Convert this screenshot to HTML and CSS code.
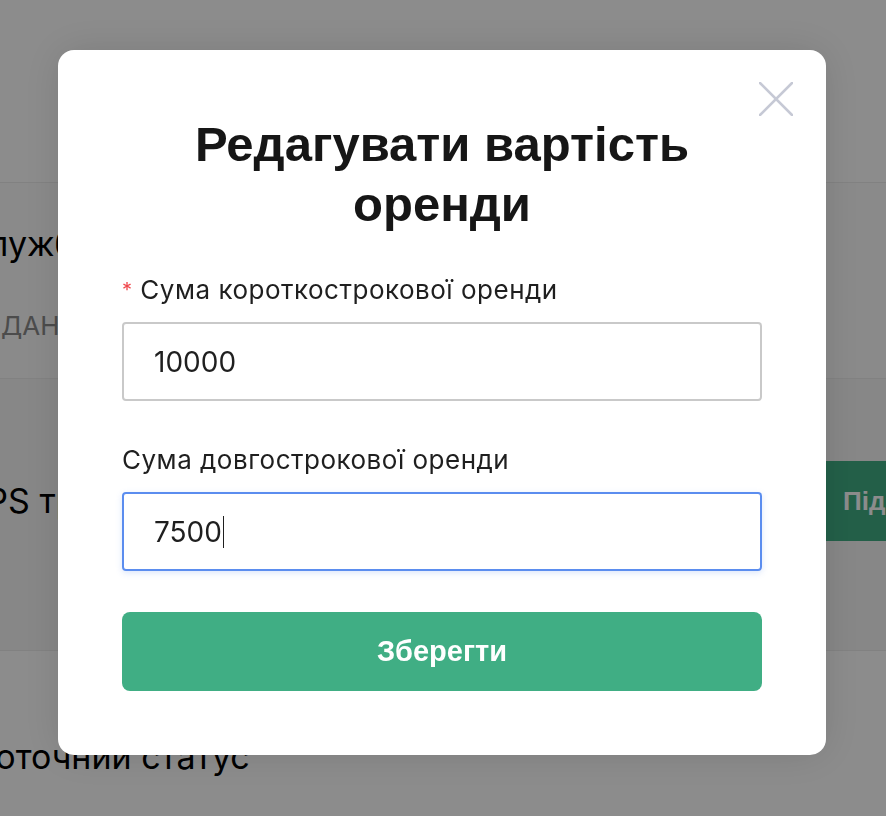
FILE: index.html
```html
<!DOCTYPE html>
<html lang="uk">
<head>
    <meta charset="UTF-8">
    <meta name="viewport" content="width=device-width, initial-scale=1.0">
    <title>Редагувати вартість оренди</title>

    <link rel="stylesheet" href="styles.css">
</head>
<body>

<div class="page">
    <div class="page-row page-top"></div>

    <div class="page-row page-service">
        <div class="row-title">Службові</div>
        <div class="row-sub">ДАНІ</div>
    </div>

    <div class="page-row page-gps">
        <div class="row-title">GPS трекер</div>
        <button class="page-btn">Підключити</button>
    </div>

    <div class="page-row page-status">
        <div class="row-title">Поточний статус</div>
    </div>
</div>

<div class="overlay">
    <div class="modal">
        <button class="modal-close" aria-label="Закрити">
            <svg width="34" height="34" viewBox="0 0 34 34">
                <path d="M1 1 L33 33 M33 1 L1 33" stroke="#c6c9d5" stroke-width="2.5" stroke-linecap="round" fill="none"/>
            </svg>
        </button>

        <h2 class="modal-title">Редагувати вартість оренди</h2>

        <form class="rent-form">
            <div class="form-item">
                <label for="shortRent"><span class="required">*</span> Сума короткострокової оренди</label>
                <input type="text" id="shortRent" value="10000">
            </div>

            <div class="form-item">
                <label for="longRent">Сума довгострокової оренди</label>
                <div class="field field-active">7500<span class="caret"></span></div>
            </div>

            <button type="button" class="save-btn">Зберегти</button>
        </form>
    </div>
</div>

</body>
</html>
```

FILE: styles.css
```css
body {
    font-family: 'Inter', 'Noto Sans', sans-serif;
    margin: 0;
    padding: 0;
    background-color: #fff;
    color: #1f1f1f;
    overflow: hidden;
}

.page {
    height: 816px;
}

.page-row {
    display: flex;
    align-items: center;
    justify-content: space-between;
    border-bottom: 1px solid #ececec;
}

.page-top {
    height: 182px;
}

.page-service {
    height: 196px;
    flex-direction: column;
    align-items: flex-start;
    justify-content: flex-start;
    padding-top: 40px;
    box-sizing: border-box;
    background-color: #fbfbfb;
}

.page-service .row-title {
    margin-left: -36px;
}

.row-title {
    font-size: 34px;
    color: #000;
    margin-left: -24px;
}

.row-sub {
    font-size: 26px;
    color: #8a8a8a;
    margin-top: 46px;
    margin-left: 1px;
}

.page-gps {
    height: 272px;
    background-color: #f6f6f6;
    align-items: flex-start;
    padding-top: 101px;
    box-sizing: border-box;
}

.page-gps .row-title {
    margin-left: -39px;
}

.page-btn {
    background-color: #40ae84;
    color: #fff;
    border: none;
    height: 80px;
    width: 200px;
    margin-top: -19px;
    margin-right: -140px;
    font-family: 'Liberation Sans', sans-serif;
    font-weight: bold;
    font-size: 26px;
    text-align: left;
    padding-left: 17px;
}

.page-status {
    height: 166px;
    border-bottom: none;
    align-items: flex-end;
    padding-bottom: 40px;
    box-sizing: border-box;
}

.page-status .row-title {
    margin-left: -30px;
}

.overlay {
    position: fixed;
    inset: 0;
    background-color: rgba(0, 0, 0, 0.45);
    display: flex;
    justify-content: flex-start;
    align-items: flex-start;
    padding: 50px 0 0 58px;
}

.modal {
    position: relative;
    width: 768px;
    box-sizing: border-box;
    padding: 64px 64px 64px;
    background-color: #fff;
    border-radius: 16px;
    box-shadow: 0 0 40px rgba(0, 0, 0, 0.12);
}

.modal-close {
    position: absolute;
    top: 32px;
    right: 33px;
    padding: 0;
    border: none;
    background: none;
    cursor: pointer;
    line-height: 0;
}

.modal-title {
    margin: 0 0 38px;
    font-family: 'Liberation Sans', 'Arial', sans-serif;
    font-weight: bold;
    font-size: 49px;
    line-height: 60px;
    text-align: center;
    color: #161616;
    padding: 0 40px;
}

.form-item {
    margin-bottom: 41px;
}

.form-item label {
    display: block;
    font-size: 26px;
    letter-spacing: 0.5px;
    line-height: 36px;
    margin-bottom: 14px;
    color: #1f1f1f;
}

.required {
    color: #f0484d;
    font-size: 20px;
    vertical-align: 2px;
}

.form-item input,
.field {
    display: flex;
    align-items: center;
    width: 100%;
    height: 79px;
    box-sizing: border-box;
    border: 2px solid #c9c9c9;
    border-radius: 4px;
    padding: 0 30px;
    font-family: 'Inter', sans-serif;
    font-size: 28px;
    color: #1f1f1f;
    outline: none;
}

.field-active {
    border-color: #5b8def;
    box-shadow: 0 2px 6px rgba(91, 141, 239, 0.22);
}

.caret {
    display: inline-block;
    width: 1.5px;
    height: 32px;
    margin-left: 1px;
    background-color: #1f1f1f;
}

.save-btn {
    display: block;
    width: 100%;
    height: 79px;
    border: none;
    border-radius: 8px;
    background-color: #40ae84;
    color: #fff;
    font-family: 'Liberation Sans', 'Arial', sans-serif;
    font-weight: bold;
    font-size: 29px;
    cursor: pointer;
}
```
